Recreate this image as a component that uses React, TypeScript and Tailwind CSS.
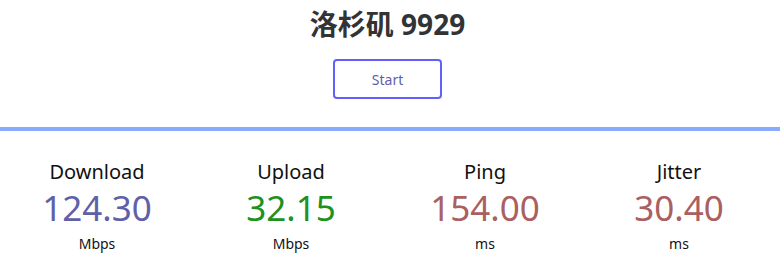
const STATS = [
  { name: 'Download', value: '124.30', unit: 'Mbps', color: 'text-[#6060aa]' },
  { name: 'Upload', value: '32.15', unit: 'Mbps', color: 'text-[#209020]' },
  { name: 'Ping', value: '154.00', unit: 'ms', color: 'text-[#aa6060]' },
  { name: 'Jitter', value: '30.40', unit: 'ms', color: 'text-[#aa6060]' },
];

export default function App() {
  return (
    <div
      className="w-[780px] h-[266px] bg-white overflow-hidden text-center"
      style={{ fontFamily: '"Noto Sans", "Noto Sans CJK SC", sans-serif' }}
    >
      <div className="pr-[5px]">
        <h1 className="pt-[6px] text-[28px] leading-[36px] font-bold text-[#333]">洛杉矶 9929</h1>

        <div className="flex justify-center mt-[17px]">
          <button className="w-[109px] h-[40px] border-2 border-[#6060ff] rounded-[4px] text-[14px] text-[#6060aa] bg-white">
            Start
          </button>
        </div>
      </div>

      {/* progress bar */}
      <div className="mt-[28px] h-[4px] bg-[#88aaff]" />

      <div className="grid grid-cols-4 mt-[29px] pr-[4px]">
        {STATS.map((s) => (
          <div key={s.name} className="flex flex-col items-center">
            <div className="text-[20px] leading-[24px] text-[#111]">{s.name}</div>
            <div className={`text-[35px] leading-[47px] ${s.color}`}>{s.value}</div>
            <div className="mt-[4px] text-[14px] leading-[18px] text-[#111]">{s.unit}</div>
          </div>
        ))}
      </div>
    </div>
  );
}
